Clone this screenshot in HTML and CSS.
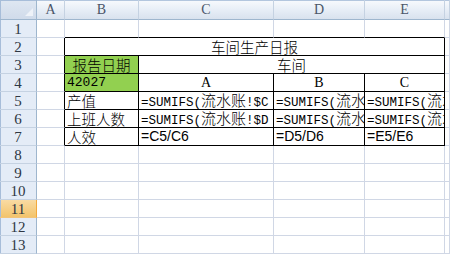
FILE: index.html
```html
<!DOCTYPE html>
<html lang="zh-CN">
<head>
    <meta charset="UTF-8">
    <title>车间生产日报</title>
    <link rel="stylesheet" href="styles.css">
</head>
<body>
    <div class="sheet">
        <!-- column headers -->
        <div class="corner"></div>
        <div class="hd">A</div>
        <div class="hd">B</div>
        <div class="hd">C</div>
        <div class="hd">D</div>
        <div class="hd">E</div>
        <div class="hd"></div>

        <!-- row 1 -->
        <div class="rh">1</div>
        <div class="c"></div>
        <div class="c bb"></div>
        <div class="c bb"></div>
        <div class="c bb"></div>
        <div class="c bb"></div>
        <div class="c"></div>

        <!-- row 2 -->
        <div class="rh">2</div>
        <div class="c br"></div>
        <div class="c br bb zh mid span4">车间生产日报</div>
        <div class="c"></div>

        <!-- row 3 -->
        <div class="rh">3</div>
        <div class="c br"></div>
        <div class="c br bb zh mid green">报告日期</div>
        <div class="c br bb zh mid span3">车间</div>
        <div class="c"></div>

        <!-- row 4 -->
        <div class="rh">4</div>
        <div class="c br"></div>
        <div class="c br bb num green">42027</div>
        <div class="c br bb serif mid">A</div>
        <div class="c br bb serif mid">B</div>
        <div class="c br bb serif mid">C</div>
        <div class="c"></div>

        <!-- row 5 -->
        <div class="rh">5</div>
        <div class="c br"></div>
        <div class="c br bb zh">产值</div>
        <div class="c br bb mono">=SUMIFS(<span class="zh">流水账</span>!$C</div>
        <div class="c br bb mono">=SUMIFS(<span class="zh">流水账</span>!$C</div>
        <div class="c br bb mono">=SUMIFS(<span class="zh">流水账</span>!$C</div>
        <div class="c"></div>

        <!-- row 6 -->
        <div class="rh">6</div>
        <div class="c br"></div>
        <div class="c br bb zh">上班人数</div>
        <div class="c br bb mono">=SUMIFS(<span class="zh">流水账</span>!$D</div>
        <div class="c br bb mono">=SUMIFS(<span class="zh">流水账</span>!$D</div>
        <div class="c br bb mono">=SUMIFS(<span class="zh">流水账</span>!$D</div>
        <div class="c"></div>

        <!-- row 7 -->
        <div class="rh">7</div>
        <div class="c br"></div>
        <div class="c br bb zh">人效</div>
        <div class="c br bb sans">=C5/C6</div>
        <div class="c br bb sans">=D5/D6</div>
        <div class="c br bb sans">=E5/E6</div>
        <div class="c"></div>

        <!-- empty rows -->
        <div class="rh">8</div>
        <div class="c"></div><div class="c"></div><div class="c"></div><div class="c"></div><div class="c"></div><div class="c"></div>
        <div class="rh">9</div>
        <div class="c"></div><div class="c"></div><div class="c"></div><div class="c"></div><div class="c"></div><div class="c"></div>
        <div class="rh">10</div>
        <div class="c"></div><div class="c"></div><div class="c"></div><div class="c"></div><div class="c"></div><div class="c"></div>
        <div class="rh active">11</div>
        <div class="c"></div><div class="c"></div><div class="c"></div><div class="c"></div><div class="c"></div><div class="c"></div>
        <div class="rh">12</div>
        <div class="c"></div><div class="c"></div><div class="c"></div><div class="c"></div><div class="c"></div><div class="c"></div>
        <div class="rh">13</div>
        <div class="c"></div><div class="c"></div><div class="c"></div><div class="c"></div><div class="c"></div><div class="c"></div>
    </div>
</body>
</html>
```

FILE: styles.css
```css
body {
    margin: 0;
    overflow: hidden;
    background: #fff;
}

.sheet {
    display: grid;
    grid-template-columns: 37px 28px 74px 135px 91px 80px 1fr;
    grid-template-rows: 20px repeat(13, 18px);
    width: 450px;
    height: 254px;
}

.sheet > div {
    box-sizing: border-box;
    white-space: nowrap;
}

.corner {
    position: relative;
    background: linear-gradient(#dfe7f2, #d0dbea);
    border-right: 1px solid #9eb6ce;
    border-bottom: 1px solid #9eb6ce;
    box-shadow: inset 1px 1px #a7bdd9;
}

.corner::after {
    content: "";
    position: absolute;
    right: 3px;
    bottom: 3px;
    width: 8px;
    height: 8px;
    background: #eef2f8;
    clip-path: polygon(100% 0, 100% 100%, 0 100%);
}

.hd {
    background: linear-gradient(#f8fafd, #e6edf6 55%, #d9e2ee);
    border-right: 1px solid #c5d2e2;
    border-bottom: 1px solid #9eb6ce;
    box-shadow: inset 0 1px #b3c6de;
    font: 14px "Liberation Serif", serif;
    color: #4a5568;
    text-align: center;
    line-height: 20px;
}

.rh {
    background: #e4ecf7;
    border-right: 1px solid #9eb6ce;
    border-bottom: 1px solid #c5d2e2;
    box-shadow: inset 1px 0 #a7bdd9;
    font: 15px "Liberation Serif", serif;
    color: #2e3744;
    text-align: center;
    line-height: 18px;
}

.rh.active {
    background: linear-gradient(#f9dba3, #f3c46c);
    border-right-color: #f2a93d;
    border-bottom-color: #f2c47a;
}

.c {
    border-right: 1px solid #d0d7e5;
    border-bottom: 1px solid #d0d7e5;
    padding-left: 2px;
    line-height: 17px;
    color: #000;
}

.br { border-right-color: #000; }
.bb { border-bottom-color: #000; }

.span4 { grid-column: span 4; }
.span3 { grid-column: span 3; }

.mid {
    text-align: center;
    padding-left: 0;
}

.green { background: #92d050; }

.zh {
    font-family: "Noto Sans CJK SC", sans-serif;
    font-size: 14.5px;
    font-weight: 300;
}

/* formula text is cut at the next filled cell */
.mono {
    font-family: "Liberation Mono", "Noto Sans CJK SC", monospace;
    font-size: 12.5px;
    overflow: hidden;
}

.mono .zh {
    font-size: 15px;
    line-height: 1;
}

.num {
    font-family: "Liberation Mono", monospace;
    font-size: 13px;
}

.serif {
    font-family: "Liberation Serif", serif;
    font-size: 14px;
}

.sans {
    font-family: "Liberation Sans", sans-serif;
    font-size: 14px;
}
```
